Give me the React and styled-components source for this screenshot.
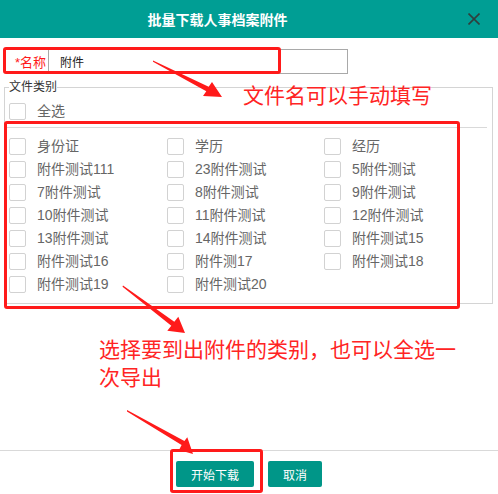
import React from 'react'
import styled, { createGlobalStyle } from 'styled-components'

const GlobalStyle = createGlobalStyle`
  body {
    margin: 0;
    background: #fff;
    font-family: "Liberation Sans", "Noto Sans CJK SC", sans-serif;
  }
`

const Dialog = styled.div`
  position: relative;
  width: 498px;
  height: 494px;
  display: flex;
  flex-direction: column;
  background: #fff;
  overflow: hidden;
`

const Header = styled.div`
  height: 38px;
  flex-shrink: 0;
  display: flex;
  align-items: center;
  background: #009e94;
`

const Title = styled.div`
  flex: 1;
  text-align: center;
  color: #fff;
  font-size: 14px;
  font-weight: bold;
`

const CloseButton = styled.div`
  width: 12px;
  height: 12px;
  margin: 0 18px 0 33px;
  display: flex;
`

const Body = styled.div`
  padding: 11px 5px 0 4px;
`

const NameRow = styled.div`
  display: flex;
  height: 25px;
`

const NameLabel = styled.label`
  width: 44px;
  box-sizing: border-box;
  padding-left: 11px;
  display: flex;
  align-items: center;
  color: #ff1a1a;
  font-size: 13px;
`

const NameInput = styled.input`
  width: 300px;
  height: 25px;
  box-sizing: border-box;
  border: 1px solid #a9a9a9;
  padding: 0 0 0 11px;
  margin: 0;
  font-size: 12px;
  font-family: inherit;
  color: #222;
  outline: none;
`

const Fieldset = styled.fieldset`
  margin: 6px 0 0 0;
  padding: 9px 0 10px 2px;
  border: 1px solid #d4d4d4;
  min-width: 0;
`

const Legend = styled.legend`
  padding: 0;
  margin-left: 2px;
  font-size: 12px;
  line-height: 14px;
  color: #333;
`

const SelectAllRow = styled.div`
  display: flex;
  align-items: center;
  gap: 11px;
  height: 17px;
  padding: 0 0 7px 2px;
  margin-right: 5px;
  border-bottom: 1px solid #d9d9d9;
`

const Grid = styled.div`
  display: grid;
  grid-template-columns: 158px 157px 1fr;
  row-gap: 6px;
  padding: 10px 0 0 2px;
`

const Item = styled.label`
  display: flex;
  align-items: center;
  gap: 11px;
  height: 17px;
  font-size: 14px;
  line-height: 17px;
  color: #666;
  white-space: nowrap;
`

const Check = styled.input.attrs({ type: 'checkbox' })`
  appearance: none;
  width: 17px;
  height: 17px;
  margin: 0;
  flex-shrink: 0;
  box-sizing: border-box;
  border: 1px solid #d2d2d2;
  border-radius: 2px;
  background: #fff;
`

const Footer = styled.div`
  margin-top: auto;
  height: 44px;
  box-sizing: border-box;
  border-top: 1px solid #d9d9d9;
  padding-top: 10px;
  display: flex;
  justify-content: center;
  gap: 14px;
`

const Button = styled.button`
  height: 26px;
  padding: 0 15px;
  border: none;
  border-radius: 2px;
  background: #009688;
  color: #fff;
  font-size: 12px;
  font-family: inherit;
`

const Mark = styled.div`
  position: absolute;
  left: ${p => p.$left}px;
  top: ${p => p.$top}px;
  width: ${p => p.$width}px;
  height: ${p => p.$height}px;
  box-sizing: border-box;
  border: 3px solid #ff1a1a;
  border-radius: 3px;
  pointer-events: none;
`

const Note = styled.div`
  position: absolute;
  left: ${p => p.$left}px;
  top: ${p => p.$top}px;
  color: #ff2424;
  font-size: 21px;
  line-height: 28px;
  white-space: nowrap;
  pointer-events: none;
`

const ArrowLayer = styled.svg`
  position: absolute;
  left: 0;
  top: 0;
  pointer-events: none;
`

const categories = [
  '身份证', '学历', '经历',
  '附件测试111', '23附件测试', '5附件测试',
  '7附件测试', '8附件测试', '9附件测试',
  '10附件测试', '11附件测试', '12附件测试',
  '13附件测试', '14附件测试', '附件测试15',
  '附件测试16', '附件测17', '附件测试18',
  '附件测试19', '附件测试20',
]

const arrows = [
  '153,60.5 208.7,86.8 212,82 222,97 203,96 206.3,91.2 153,61.8',
  '123,285.5 174.3,321.7 178.3,316.7 185,333 167.3,330.7 171.3,325.7 122.5,286.8',
  '127,410 184.4,440.9 187.3,437.3 193,454 179,450 181.6,445.1 127,411.5',
]

const App = () => {
  return (
    <>
      <GlobalStyle />
      <Dialog>
        <Header>
          <Title>批量下载人事档案附件</Title>
          <CloseButton>
            <svg width="12" height="12" viewBox="0 0 12 12">
              <path d="M0.5 0.5 L11.5 11.5 M11.5 0.5 L0.5 11.5" stroke="#2f3f3d" strokeWidth="1.6" />
            </svg>
          </CloseButton>
        </Header>

        <Body>
          <NameRow>
            <NameLabel>*名称</NameLabel>
            <NameInput defaultValue="附件" />
          </NameRow>

          <Fieldset>
            <Legend>文件类别</Legend>
            <SelectAllRow>
              <Check />
              <Item as="span">全选</Item>
            </SelectAllRow>
            <Grid>
              {categories.map(name => (
                <Item key={name}>
                  <Check />
                  {name}
                </Item>
              ))}
            </Grid>
          </Fieldset>
        </Body>

        <Footer>
          <Button>开始下载</Button>
          <Button>取消</Button>
        </Footer>

        <Mark $left={3} $top={47} $width={278} $height={27} />
        <Mark $left={4} $top={121} $width={456} $height={188} />
        <Mark $left={170} $top={449} $width={93} $height={44} />

        <Note $left={243} $top={82}>文件名可以手动填写</Note>
        <Note $left={99} $top={336}>
          选择要到出附件的类别，也可以全选一<br />次导出
        </Note>

        <ArrowLayer width="498" height="494">
          {arrows.map(points => (
            <polygon key={points} points={points} fill="#ff1a1a" />
          ))}
        </ArrowLayer>
      </Dialog>
    </>
  )
}

export default App
